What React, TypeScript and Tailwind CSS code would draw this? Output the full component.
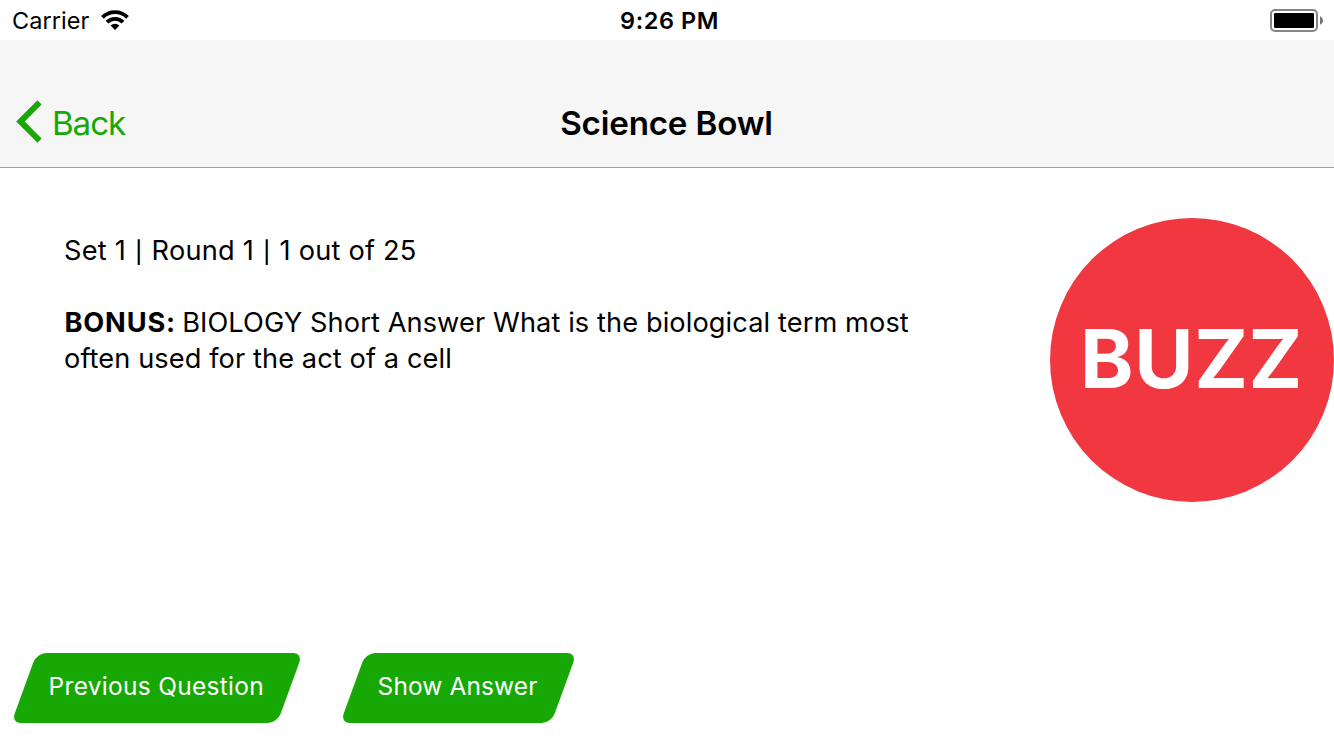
import type { ReactNode } from "react";

function WifiIcon() {
  return (
    <svg className="h-5 w-7" viewBox="0 0 28 20" fill="none" aria-hidden="true">
      <g stroke="#000" strokeWidth="3.9">
        <path d="M1.5 7.3 A17.8 17.8 0 0 1 26.5 7.3" />
        <path d="M6 12.2 A11.2 11.2 0 0 1 22 12.2" />
      </g>
      <path d="M9.6 15.5 A6.4 6.4 0 0 1 18.4 15.5 L14 20 Z" fill="#000" />
    </svg>
  );
}

function BatteryIcon() {
  return (
    <svg className="h-6 w-[54px]" viewBox="0 0 54 24" aria-hidden="true">
      <rect x="1" y="1" width="46" height="21" rx="4" fill="none" stroke="#868686" strokeWidth="2" />
      <rect x="4" y="4" width="40" height="15" rx="1.2" fill="#000" />
      <path d="M50 7.2 C51.8 8 53 9.6 53 11.5 C53 13.4 51.8 15 50 15.8 Z" fill="#747474" />
    </svg>
  );
}

function StatusBar() {
  return (
    <div className="grid h-10 grid-cols-[1fr_auto_1fr] items-center text-[23.5px] leading-10">
      <div className="flex items-center gap-3 pl-3">
        <span className="pt-0.5 leading-[38px] tracking-[0.05px]">Carrier</span>
        <WifiIcon />
      </div>
      <span className="pl-[5px] pt-0.5 leading-[38px] font-semibold tracking-[0.55px]">9:26 PM</span>
      <div className="flex justify-end pr-[10px] pt-0.5">
        <BatteryIcon />
      </div>
    </div>
  );
}

function NavBar() {
  return (
    <header className="grid h-32 grid-cols-[1fr_auto_1fr] border-b border-[#a0a0a0] bg-[#f6f6f6] pt-[63px] text-[33.2px] leading-10">
      <button className="flex h-10 items-start pl-4 text-[#17a805]">
        <svg className="-mt-[3px] h-[43px] w-[26px]" viewBox="0 0 26 43" fill="currentColor" aria-hidden="true">
          <path d="M21.5 0.3 L25.6 4.4 L8.7 21.5 L25.6 38.6 L21.5 42.7 L0.2 21.5 Z" />
        </svg>
        <span className="pl-[10px] tracking-[-1.1px]">Back</span>
      </button>
      <h1 className="pr-px font-semibold tracking-[-0.2px]">Science Bowl</h1>
    </header>
  );
}

function Divider() {
  return <span className="px-[1.2px] text-[21.5px] leading-none font-medium">|</span>;
}

function SlantButton({ className, children }: { className: string; children: ReactNode }) {
  return (
    <button
      className={`flex h-[70px] -skew-x-[20deg] items-center justify-center rounded-[9.5px] bg-[#17a805] pb-1 text-[24.5px] text-white ${className}`}
    >
      <span className="skew-x-[20deg] whitespace-nowrap">{children}</span>
    </button>
  );
}

export default function App() {
  return (
    <div className="flex h-[750px] w-[1334px] flex-col overflow-hidden bg-white font-['Inter',sans-serif] text-black">
      <StatusBar />
      <NavBar />
      <main className="flex flex-1 flex-col">
        <div className="flex items-start justify-between pl-16 pt-[50px]">
          <div className="pt-[15px] text-[27.2px] leading-9">
            <p className="tracking-[0.2px]">
              Set 1 <Divider /> Round 1 <Divider /> 1 out of 25
            </p>
            <p className="pt-9 tracking-[0.1px] whitespace-nowrap">
              <strong className="pl-[0.5px] font-bold tracking-[0.83px]">BONUS:</strong>{" "}
              <span className="-ml-[1.5px]">BIOLOGY Short Answer What is the biological term most</span>
              <br />
              <span className="tracking-[0.09px]">often used for the act of a cell</span>
            </p>
          </div>
          <button className="flex size-[284px] items-center justify-center rounded-full bg-[#f13840] pb-px pr-px text-[81px] font-bold tracking-[0.6px] text-white">
            BUZZ
          </button>
        </div>
        <div className="mt-auto flex gap-[63px] pb-[27px] pl-6">
          <SlantButton className="w-[266px] pr-[2px] tracking-[0.29px]">Previous Question</SlantButton>
          <SlantButton className="w-[211px] pr-1 tracking-[0.1px]">Show Answer</SlantButton>
        </div>
      </main>
    </div>
  );
}
